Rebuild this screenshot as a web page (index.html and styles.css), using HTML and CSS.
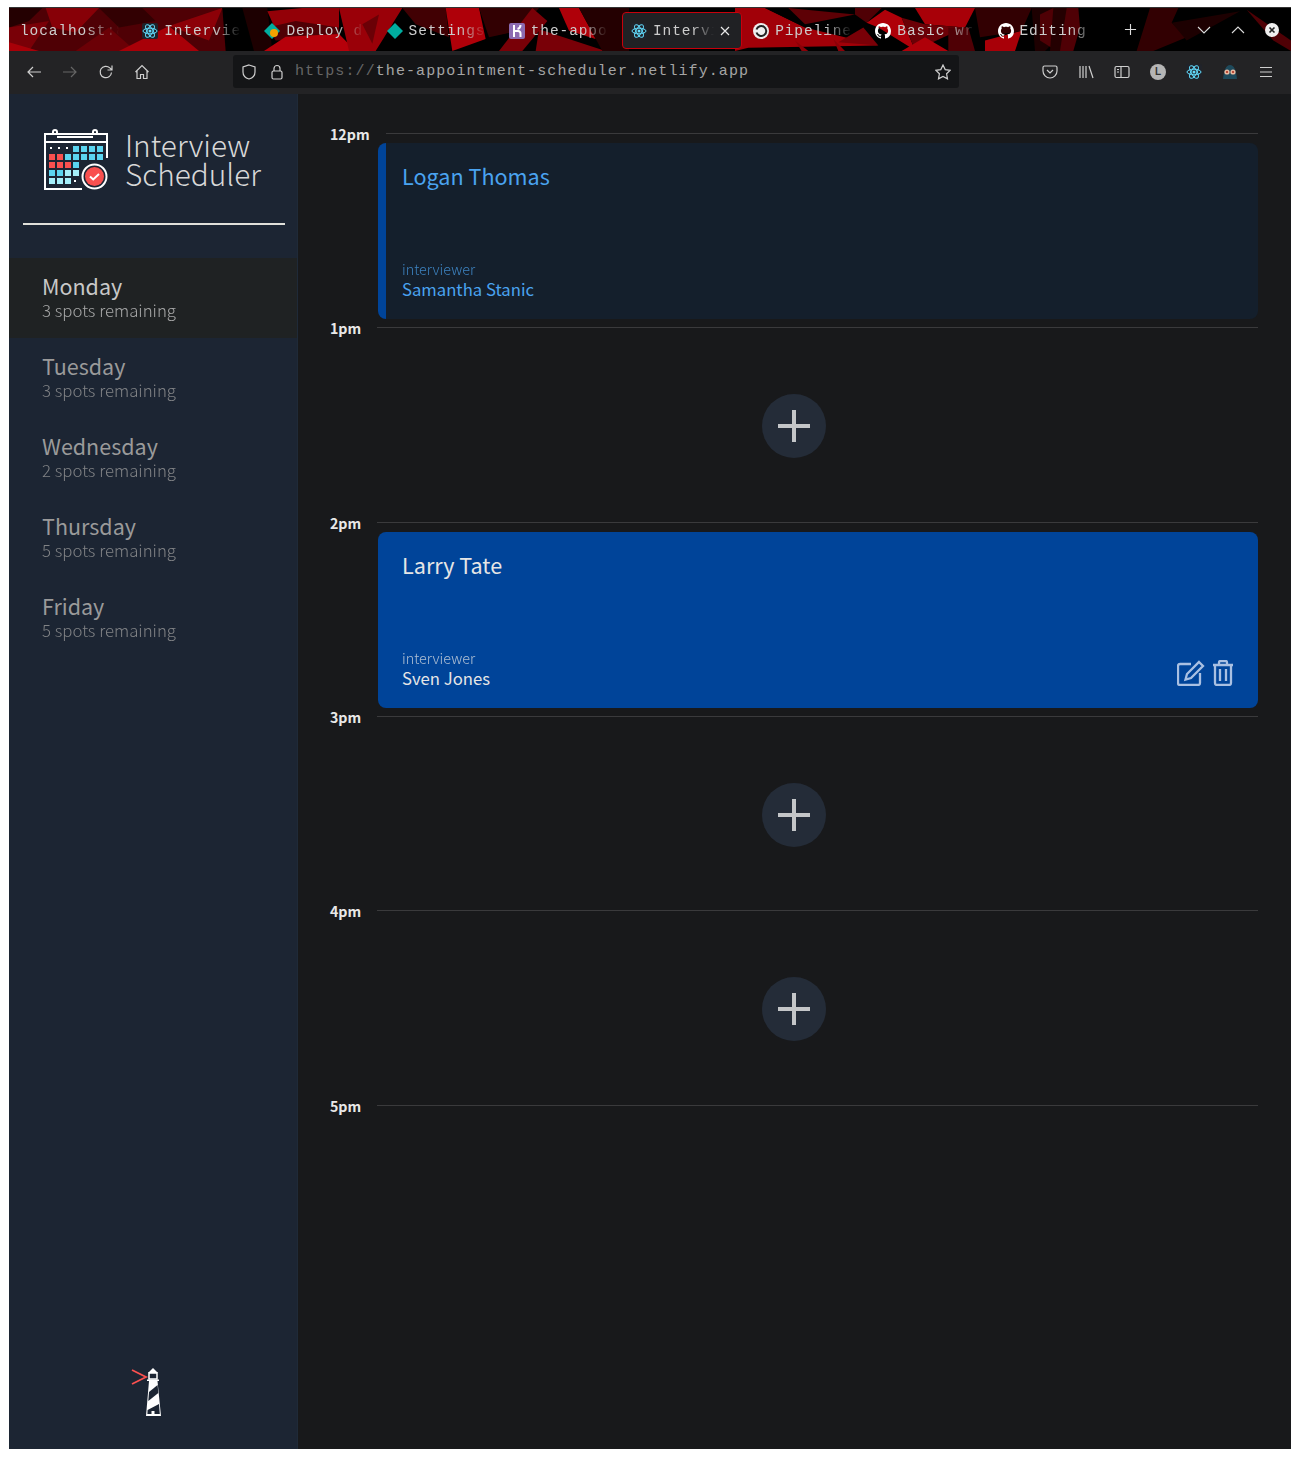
FILE: index.html
```html
<!DOCTYPE html>
<html>
	<head>
		<meta charset="utf-8">
		<title>Interview Scheduler</title>
		<link rel="stylesheet" href="styles.css">
	</head>
	<body>
		<svg class="defs" width="0" height="0">
			<symbol id="react" viewBox="0 0 16 16">
				<rect width="16" height="16" rx="2" fill="#20232a"/>
				<g fill="none" stroke="#61dafb" stroke-width="1">
					<ellipse cx="8" cy="8" rx="7" ry="2.8"/>
					<ellipse cx="8" cy="8" rx="7" ry="2.8" transform="rotate(60 8 8)"/>
					<ellipse cx="8" cy="8" rx="7" ry="2.8" transform="rotate(120 8 8)"/>
				</g>
				<circle cx="8" cy="8" r="1.5" fill="#61dafb"/>
			</symbol>
			<symbol id="github" viewBox="0 0 16 16">
				<path fill="#fff" d="M8 0C3.58 0 0 3.58 0 8c0 3.54 2.29 6.53 5.47 7.59.4.07.55-.17.55-.38 0-.19-.01-.82-.01-1.49-2.01.37-2.53-.49-2.69-.94-.09-.23-.48-.94-.82-1.13-.28-.15-.68-.52-.01-.53.63-.01 1.08.58 1.23.82.72 1.21 1.87.87 2.33.66.07-.52.28-.87.51-1.07-1.78-.2-3.64-.89-3.64-3.95 0-.87.31-1.59.82-2.15-.08-.2-.36-1.02.08-2.12 0 0 .67-.21 2.2.82.64-.18 1.32-.27 2-.27.68 0 1.36.09 2 .27 1.53-1.04 2.2-.82 2.2-.82.44 1.1.16 1.92.08 2.12.51.56.82 1.27.82 2.15 0 3.07-1.87 3.75-3.65 3.95.29.25.54.73.54 1.48 0 1.07-.01 1.93-.01 2.2 0 .21.15.46.55.38A8.013 8.013 0 0016 8c0-4.42-3.58-8-8-8z"/>
			</symbol>
		</svg>

		<div class="window">
			<!-- tab strip -->
			<div class="tabbar">
				<svg class="theme" viewBox="0 0 3846 132" preserveAspectRatio="none">
					<rect width="3846" height="132" fill="#000"/>
					<!-- first third -->
					<polygon fill="#5a0006" points="0,0 640,0 690,132 0,132"/>
					<polygon fill="#9a0008" points="110,0 270,0 200,75 130,60"/>
					<polygon fill="#2a0002" points="0,0 100,0 60,40 0,60"/>
					<polygon fill="#8a0008" points="0,60 120,40 60,132 0,132"/>
					<polygon fill="#c0000a" points="0,105 90,132 0,132"/>
					<polygon fill="#3a0003" points="270,0 400,0 440,40 330,60"/>
					<polygon fill="#7a0007" points="200,132 300,60 380,132"/>
					<polygon fill="#c0000a" points="330,132 480,55 570,132"/>
					<polygon fill="#a00009" points="480,55 640,0 600,100"/>
					<polygon fill="#000" points="640,0 720,0 745,132 650,132"/>
					<polygon fill="#220002" points="700,0 775,0 790,132 735,132"/>
					<polygon fill="#a80009" points="775,10 880,0 990,0 990,70 810,90"/>
					<polygon fill="#5a0006" points="775,60 860,40 990,60 990,90 800,100"/>
					<polygon fill="#d0000c" points="765,132 830,88 990,80 1040,132"/>
					<!-- second third -->
					<g transform="translate(990)">
						<polygon fill="#b0000a" points="0,0 150,0 190,0 110,132 30,132"/>
						<polygon fill="#7a0007" points="70,50 120,20 100,110"/>
						<polygon fill="#000" points="130,132 220,50 320,132"/>
						<polygon fill="#4a0004" points="190,0 320,0 330,90 230,50"/>
						<polygon fill="#c8000b" points="320,0 420,0 440,95 340,132"/>
						<polygon fill="#3a0003" points="420,0 600,0 540,70 450,90"/>
						<polygon fill="#000" points="440,95 540,70 500,132 440,132"/>
						<polygon fill="#8a0008" points="580,0 625,40 550,132 480,132"/>
						<polygon fill="#c8000b" points="660,0 720,0 770,95 690,70"/>
						<polygon fill="#8a0008" points="600,65 800,132 590,132"/>
						<polygon fill="#2a0002" points="720,0 870,0 870,132 790,132"/>
					</g>
					<!-- third third -->
					<g transform="translate(2178)">
						<polygon fill="#b8000a" points="0,0 90,0 210,60 430,115 40,122 0,132"/>
						<polygon fill="#000" points="90,0 160,0 210,60"/>
						<polygon fill="#6a0006" points="160,0 360,20 210,50"/>
						<polygon fill="#8a0008" points="310,105 385,60 430,115"/>
						<polygon fill="#a00009" points="180,100 220,132 200,132"/>
						<polygon fill="#a00009" points="295,95 330,132 310,132"/>
						<polygon fill="#5a0006" points="360,0 440,0 395,45 360,20"/>
						<polygon fill="#c8000b" points="395,45 450,5 500,30 540,130 430,60"/>
						<polygon fill="#c0000a" points="540,0 720,0 690,60 570,50"/>
						<polygon fill="#7a0007" points="500,30 570,50 690,60 540,130"/>
						<polygon fill="#c8000b" points="500,132 570,90 640,132"/>
						<polygon fill="#5a0006" points="640,60 700,60 720,132 640,132"/>
						<polygon fill="#c0000a" points="750,100 860,70 840,132 750,132"/>
						<polygon fill="#3a0003" points="720,0 890,0 860,70 735,90"/>
						<polygon fill="#220002" points="890,0 990,0 990,70 930,132 900,132"/>
					</g>
					<!-- last bit, mostly black -->
					<g transform="translate(3093)">
						<polygon fill="#5a0006" points="0,20 40,0 115,0 120,60 100,132 50,132 0,100"/>
						<polygon fill="#2a0002" points="40,0 80,0 60,132 30,132"/>
						<polygon fill="#3a0003" points="290,132 330,0 415,0 395,45 440,90 340,132"/>
						<polygon fill="#220002" points="395,45 600,10 440,100"/>
						<polygon fill="#5a0006" points="620,5 753,100 753,132 700,100"/>
					</g>
				</svg>

				<div class="tab"><span class="tab-title">localhost:8000</span></div>
				<div class="tab">
					<svg class="tab-icon"><use href="#react"/></svg>
					<span class="tab-title">Interview Scheduler</span>
				</div>
				<div class="tab">
					<svg class="tab-icon" viewBox="0 0 16 16">
						<polygon fill="#00ad9f" points="8,0 16,8 8,16 0,8"/>
						<circle cx="10" cy="10" r="4" fill="#f5a200"/>
					</svg>
					<span class="tab-title">Deploy details</span>
				</div>
				<div class="tab">
					<svg class="tab-icon" viewBox="0 0 16 16">
						<polygon fill="#00ad9f" points="8,0 16,8 8,16 0,8"/>
					</svg>
					<span class="tab-title">Settings for</span>
				</div>
				<div class="tab">
					<svg class="tab-icon" viewBox="0 0 16 16">
						<rect width="16" height="16" rx="2" fill="#8c6bb1"/>
						<path fill="none" stroke="#fff" stroke-width="2" d="M5 2v12M5 8h4c2 0 2.500 1 2.500 2.500V14M11.500 2c0 2.500-1 3.500-3 4"/>
					</svg>
					<span class="tab-title">the-appointment</span>
				</div>
				<div class="tab tab-active">
					<svg class="tab-icon"><use href="#react"/></svg>
					<span class="tab-title">Interview</span>
					<svg class="tab-close" viewBox="0 0 10 10"><path d="M1 1l8 8M9 1l-8 8"/></svg>
				</div>
				<div class="tab">
					<svg class="tab-icon" viewBox="0 0 16 16">
						<circle cx="8" cy="8" r="8" fill="#eee"/>
						<path fill="none" stroke="#222" stroke-width="2" d="M3.500 6.500A5 5 0 1 1 3.500 9.500"/>
						<circle cx="8" cy="8" r="2.200" fill="#eee"/>
					</svg>
					<span class="tab-title">Pipelines</span>
				</div>
				<div class="tab">
					<svg class="tab-icon"><use href="#github"/></svg>
					<span class="tab-title">Basic writing</span>
				</div>
				<div class="tab">
					<svg class="tab-icon"><use href="#github"/></svg>
					<span class="tab-title">Editing the</span>
				</div>
				<div class="tab-controls">
					<svg class="tab-new" viewBox="0 0 14 14"><path d="M7 1v12M1 7h12"/></svg>
					<div class="wm-buttons">
						<svg class="wm-btn" viewBox="0 0 14 14"><path d="M1 4l6 6 6-6"/></svg>
						<svg class="wm-btn" viewBox="0 0 14 14"><path d="M1 10l6-6 6 6"/></svg>
						<svg class="wm-close" viewBox="0 0 14 14">
							<circle cx="7" cy="7" r="7" fill="#eee"/>
							<path d="M4.500 4.500l5 5M9.500 4.500l-5 5" stroke="#222" stroke-width="1.600"/>
						</svg>
					</div>
				</div>
			</div>

			<!-- toolbar -->
			<div class="toolbar">
				<div class="nav-group">
					<button class="tool"><svg viewBox="0 0 16 16"><path d="M15 8H2M7 3L2 8l5 5"/></svg></button>
					<button class="tool tool-off"><svg viewBox="0 0 16 16"><path d="M1 8h13M9 3l5 5-5 5"/></svg></button>
					<button class="tool"><svg viewBox="0 0 16 16"><path d="M13.500 8.500a5.700 5.700 0 1 1-1.700-4.600L14 6M14 1.500V6H9.500"/></svg></button>
					<button class="tool"><svg viewBox="0 0 16 16"><path d="M1.500 8L8 1.500 14.500 8M3 7v7.500h3.500v-4h3v4H13V7"/></svg></button>
				</div>
				<div class="urlbar">
					<svg class="url-icon" viewBox="0 0 16 16"><path d="M8 1l6 2v5c0 3.500-2.500 6-6 7-3.500-1-6-3.500-6-7V3z"/></svg>
					<svg class="url-icon" viewBox="0 0 16 16"><rect x="3" y="7" width="10" height="8" rx="1.500"/><path d="M5 7V4.500a3 3 0 0 1 6 0V7"/></svg>
					<span class="url-text"><span class="url-dim">https://</span>the-appointment-scheduler.netlify.app</span>
					<svg class="url-star" viewBox="0 0 16 16"><path d="M8 1l2.200 4.600 5 .7-3.600 3.500.9 5L8 12.400l-4.500 2.400.9-5L.8 6.300l5-.7z"/></svg>
				</div>
				<div class="nav-group">
					<button class="tool"><svg viewBox="0 0 16 16"><path d="M2.500 2h11A1.500 1.500 0 0 1 15 3.500V7a7 7 0 0 1-14 0V3.500A1.500 1.500 0 0 1 2.500 2zM5 6l3 3 3-3"/></svg></button>
					<button class="tool"><svg viewBox="0 0 16 16"><path d="M2 2v12M5 2v12M8 2v12M11 2l4 12"/></svg></button>
					<button class="tool"><svg viewBox="0 0 16 16"><rect x="1" y="2.500" width="14" height="11" rx="1.500"/><path d="M7 2.500v11M3 5.500h2M3 8h2"/></svg></button>
					<button class="tool"><span class="avatar">L</span></button>
					<button class="tool"><svg class="ext"><use href="#react"/></svg></button>
					<button class="tool">
						<svg class="ext-owl" viewBox="0 0 16 16">
							<path fill="#1e4a5c" d="M8 1c4 0 6 5 7 14H1C2 6 4 1 8 1z"/>
							<circle cx="5" cy="8" r="2.600" fill="#e8b9a0"/>
							<circle cx="11" cy="8" r="2.600" fill="#e8b9a0"/>
							<circle cx="5" cy="8" r="1.100" fill="#b03020"/>
							<circle cx="11" cy="8" r="1.100" fill="#b03020"/>
						</svg>
					</button>
					<button class="tool"><svg viewBox="0 0 16 16"><path d="M2 3.500h12M2 8h12M2 12.500h12"/></svg></button>
				</div>
			</div>

			<div class="layout">
				<aside class="sidebar">
					<div class="brand">
						<svg class="brand-logo" viewBox="44 129 64 62">
							<g fill="none" stroke="#fff" stroke-width="2">
								<path d="M82 189H45V134h62v24"/>
								<path d="M45 142h62M57 137h36"/>
								<path d="M53 135v-3a2 2 0 0 1 4 0v3M93 135v-3a2 2 0 0 1 4 0v3"/>
							</g>
							<g fill="#fff">
								<rect x="50" y="147" width="2" height="2"/>
								<rect x="58" y="147" width="2" height="2"/>
								<rect x="66" y="147" width="2" height="2"/>
								<rect x="74" y="180" width="2" height="2"/>
							</g>
							<g fill="#5bd5f0">
								<rect x="73" y="146" width="6" height="6"/>
								<rect x="81" y="146" width="6" height="6"/>
								<rect x="89" y="146" width="6" height="6"/>
								<rect x="97" y="146" width="6" height="6"/>
								<rect x="65" y="154" width="6" height="6"/>
								<rect x="73" y="154" width="6" height="6"/>
								<rect x="81" y="154" width="6" height="6"/>
								<rect x="89" y="154" width="6" height="6"/>
								<rect x="97" y="154" width="6" height="6"/>
								<rect x="73" y="162" width="6" height="6"/>
								<rect x="49" y="170" width="6" height="6"/>
								<rect x="57" y="170" width="6" height="6"/>
							</g>
							<g fill="#a5effa">
								<rect x="65" y="170" width="6" height="6"/>
								<rect x="73" y="170" width="6" height="6"/>
								<rect x="49" y="178" width="6" height="6"/>
								<rect x="57" y="178" width="6" height="6"/>
								<rect x="65" y="178" width="6" height="6"/>
							</g>
							<g fill="#f9504f">
								<rect x="49" y="154" width="6" height="6"/>
								<rect x="57" y="154" width="6" height="6"/>
								<rect x="49" y="162" width="6" height="6"/>
								<rect x="57" y="162" width="6" height="6"/>
								<rect x="65" y="162" width="6" height="6"/>
							</g>
							<circle cx="94.500" cy="176.500" r="13.500" fill="#1c2533"/>
							<circle cx="94.500" cy="176.500" r="12" fill="none" stroke="#fff" stroke-width="2"/>
							<circle cx="94.500" cy="176.500" r="9.500" fill="#f9504f"/>
							<path d="M90 176.500l3.200 3 5.800-5.500" fill="none" stroke="#fff" stroke-width="2"/>
						</svg>
						<div class="brand-name">Interview<br>Scheduler</div>
					</div>
					<hr class="sidebar-sep">
					<ul class="days">
						<li class="day day-active">
							<h2 class="day-name">Monday</h2>
							<p class="day-spots">3 spots remaining</p>
						</li>
						<li class="day">
							<h2 class="day-name">Tuesday</h2>
							<p class="day-spots">3 spots remaining</p>
						</li>
						<li class="day">
							<h2 class="day-name">Wednesday</h2>
							<p class="day-spots">2 spots remaining</p>
						</li>
						<li class="day">
							<h2 class="day-name">Thursday</h2>
							<p class="day-spots">5 spots remaining</p>
						</li>
						<li class="day">
							<h2 class="day-name">Friday</h2>
							<p class="day-spots">5 spots remaining</p>
						</li>
					</ul>
					<svg class="lhl" viewBox="130 1366 34 52">
						<path d="M132 1370l14 7-14 7" fill="none" stroke="#f9504f" stroke-width="1.800"/>
						<polygon fill="#fff" points="148,1373 153,1368 158,1373"/>
						<path fill="none" stroke="#fff" stroke-width="1.500" d="M149 1373h8v6h-8z"/>
						<polygon fill="#fff" points="147,1379.500 159,1379.500 159,1381 157.500,1381 161,1416 146,1416 149,1381 147,1381"/>
						<polygon fill="#1c2533" points="149,1392 157.600,1385 158.300,1393 148.300,1401"/>
						<polygon fill="#1c2533" points="147.600,1410 159,1404 159.800,1414 154.500,1414 154.500,1411 151.500,1411 151.500,1414 147.400,1414"/>
					</svg>
				</aside>

				<main class="schedule">
					<article class="slot">
						<header class="slot-time"><h4 class="time-label">12pm</h4><hr class="time-line"></header>
						<section class="card card-focus">
							<h2 class="card-name">Logan Thomas</h2>
							<div class="card-foot">
								<div>
									<h4 class="card-label">interviewer</h4>
									<h3 class="card-who">Samantha Stanic</h3>
								</div>
							</div>
						</section>
					</article>

					<article class="slot">
						<header class="slot-time"><h4 class="time-label">1pm</h4><hr class="time-line"></header>
						<div class="slot-empty"><button class="add-btn"><svg viewBox="0 0 32 32"><path d="M16 0v32M0 16h32"/></svg></button></div>
					</article>

					<article class="slot">
						<header class="slot-time"><h4 class="time-label">2pm</h4><hr class="time-line"></header>
						<section class="card card-show">
							<h2 class="card-name">Larry Tate</h2>
							<div class="card-foot">
								<div>
									<h4 class="card-label">interviewer</h4>
									<h3 class="card-who">Sven Jones</h3>
								</div>
								<div class="card-actions">
									<svg class="act-edit" viewBox="0 0 28 26">
										<path d="M14 4H3a2 2 0 0 0-2 2v17a2 2 0 0 0 2 2h18a2 2 0 0 0 2-2V13"/>
										<path d="M22 2l4 4-12 12-5.500 1.500L10 14z"/>
									</svg>
									<svg class="act-trash" viewBox="0 0 22 26">
										<path d="M1 5h20M7 5V2.500A1.500 1.500 0 0 1 8.500 1h5A1.500 1.500 0 0 1 15 2.500V5"/>
										<path d="M3 5v18a2 2 0 0 0 2 2h12a2 2 0 0 0 2-2V5M8 9v12M14 9v12"/>
									</svg>
								</div>
							</div>
						</section>
					</article>

					<article class="slot">
						<header class="slot-time"><h4 class="time-label">3pm</h4><hr class="time-line"></header>
						<div class="slot-empty"><button class="add-btn"><svg viewBox="0 0 32 32"><path d="M16 0v32M0 16h32"/></svg></button></div>
					</article>

					<article class="slot">
						<header class="slot-time"><h4 class="time-label">4pm</h4><hr class="time-line"></header>
						<div class="slot-empty"><button class="add-btn"><svg viewBox="0 0 32 32"><path d="M16 0v32M0 16h32"/></svg></button></div>
					</article>

					<article class="slot">
						<header class="slot-time"><h4 class="time-label">5pm</h4><hr class="time-line"></header>
					</article>
				</main>
			</div>
		</div>
	</body>
</html>
```
FILE: styles.css
```css
* {
	margin: 0;
	padding: 0;
	box-sizing: border-box;
}

body {
	height: 1458px;
	padding: 7px 9px 9px;
	background-color: #fff;
	overflow: hidden;
	font-family: "Noto Sans CJK SC", "Source Sans Pro", "Open Sans", sans-serif;
}

.defs {
	position: absolute;
}

.window {
	height: 100%;
	display: flex;
	flex-direction: column;
	background-color: #18191b;
}

/* tab strip */
.tabbar {
	height: 44px;
	display: flex;
	align-items: center;
	position: relative;
	flex: none;
	border-top: 1px solid #333;
	background-color: #000;
	font-family: "Liberation Mono", monospace;
	font-size: 14.5px;
	letter-spacing: 0.9px;
	color: #ccc;
}

.theme {
	position: absolute;
	left: 0;
	top: 0;
	width: 100%;
	height: 100%;
	opacity: 0.88;
}

.tab {
	width: 122.2px;
	height: 37px;
	margin-top: 2px;
	padding: 0 11px 0 10px;
	display: flex;
	align-items: center;
	gap: 6px;
	position: relative;
	border: 1px solid transparent;
	border-radius: 4px;
}

.tab-icon {
	width: 16px;
	height: 16px;
	flex: none;
}

.tab-title {
	flex: 1;
	min-width: 0;
	overflow: hidden;
	white-space: nowrap;
	-webkit-mask-image: linear-gradient(to right, #000 65%, transparent 100%);
	mask-image: linear-gradient(to right, #000 65%, transparent 100%);
}

.tab-active {
	width: 120.2px;
	margin-left: 2px;
	padding-left: 8px;
	background-color: #202124;
	border-color: #c8000b;
}

.tab-close {
	width: 10px;
	height: 10px;
	flex: none;
	fill: none;
	stroke: #e8e8e8;
	stroke-width: 1.2;
}

.tab-controls {
	flex: 1;
	display: flex;
	align-items: center;
	position: relative;
	justify-content: space-between;
	padding: 0 12px 0 15px;
}

.tab-new {
	width: 13px;
	height: 13px;
	fill: none;
	stroke: #ddd;
	stroke-width: 1.2;
}

.wm-buttons {
	display: flex;
	align-items: center;
	gap: 20px;
}

.wm-btn {
	width: 14px;
	height: 14px;
	fill: none;
	stroke: #ddd;
	stroke-width: 1.1;
}

.wm-close {
	width: 14px;
	height: 14px;
}

/* toolbar */
.toolbar {
	height: 43px;
	flex: none;
	display: flex;
	align-items: center;
	padding: 0 7px 2px;
	background-color: #232325;
}

.nav-group {
	display: flex;
}

.tool {
	width: 36px;
	height: 32px;
	display: flex;
	align-items: center;
	justify-content: center;
	border: 0;
	background: none;
}

.tool svg {
	width: 16px;
	height: 16px;
	fill: none;
	stroke: #cfcfcf;
	stroke-width: 1.2;
}

.tool-off svg {
	stroke: #666;
}

.tool .ext,
.tool .ext-owl {
	stroke: none;
}

.avatar {
	width: 16px;
	height: 16px;
	border-radius: 50%;
	background-color: #b5b5b5;
	color: #333;
	font-size: 10px;
	line-height: 16px;
	font-weight: bold;
	font-family: "Liberation Sans", sans-serif;
	text-align: center;
}

.urlbar {
	width: 726px;
	height: 33px;
	margin: 0 73px;
	padding: 0 8px;
	display: flex;
	align-items: center;
	gap: 12px;
	background-color: #141517;
	border-radius: 3px;
	font-family: "Liberation Mono", monospace;
	font-size: 15px;
	letter-spacing: 1.09px;
	color: #a5a5a5;
}

.url-icon,
.url-star {
	width: 16px;
	height: 16px;
	flex: none;
	fill: none;
	stroke: #cfcfcf;
	stroke-width: 1.200;
}

.url-text {
	flex: 1;
	margin-left: -2px;
	white-space: nowrap;
}

.url-dim {
	color: #666;
}

/* page */
.layout {
	flex: 1;
	min-height: 0;
	display: flex;
}

.sidebar {
	width: 289px;
	flex: none;
	display: flex;
	flex-direction: column;
	background-color: #1c2533;
	border-right: 1px solid #1f2a38;
}

.brand {
	display: flex;
	align-items: center;
	gap: 17px;
	padding: 35px 0 0 35px;
}

.brand-logo {
	width: 64px;
	height: 62px;
	flex: none;
}

.brand-name {
	margin-top: -3px;
	font-size: 29.8px;
	font-weight: 300;
	line-height: 28.6px;
	color: #d8d8d8;
}

.sidebar-sep {
	height: 2px;
	margin: 32px 12px 33px 14px;
	border: 0;
	background-color: #e0e0da;
}

.days {
	list-style: none;
}

.day {
	height: 80px;
	padding: 15px 33px 0;
	color: #9a9a9a;
}

.day-active {
	background-color: #1f2223;
	color: #c8c8c8;
}

.day-name {
	font-size: 21.5px;
	line-height: 26px;
	font-weight: 400;
}

.day-spots {
	font-size: 16.8px;
	line-height: 22px;
	font-weight: 300;
	opacity: 0.8;
}

.lhl {
	width: 34px;
	height: 52px;
	margin: auto 0 31px 121px;
}

.schedule {
	flex: 1;
	padding: 29.4px 33px 0 32px;
}

.slot {
	height: 194.4px;
}

.slot-time {
	height: 20px;
	display: flex;
	align-items: center;
	gap: 16px;
}

.time-label {
	font-size: 14.2px;
	line-height: 20px;
	font-weight: 700;
	color: #e8e8e8;
	padding-top: 1px;
}

.time-line {
	flex: 1;
	height: 1px;
	border: 0;
	background-color: #3a3a3c;
}

.slot-empty {
	height: 177px;
	display: flex;
	align-items: center;
	justify-content: center;
}

.add-btn {
	width: 64px;
	height: 64px;
	display: flex;
	align-items: center;
	justify-content: center;
	border: 0;
	border-radius: 50%;
	background-color: #242c38;
}

.add-btn svg {
	width: 32px;
	height: 32px;
	fill: none;
	stroke: #c4c6c8;
	stroke-width: 4;
}

.card {
	height: 176px;
	margin-left: 48px;
	padding: 16px 24px 20px;
	display: flex;
	flex-direction: column;
	justify-content: space-between;
	border-radius: 8px;
}

.card-focus {
	background-color: #141f2c;
	border-left: 8px solid #004499;
	padding-left: 16px;
	color: #4aa3f0;
}

.card-show {
	background-color: #004499;
	color: #e6e6e6;
}

.card-name {
	font-size: 21.6px;
	line-height: 34px;
	font-weight: 400;
}

.card-foot {
	display: flex;
	align-items: flex-end;
	justify-content: space-between;
}

.card-label {
	font-size: 14.4px;
	line-height: 20px;
	font-weight: 300;
	opacity: 0.75;
}

.card-who {
	font-size: 16.7px;
	line-height: 20px;
	font-weight: 400;
}

.card-actions {
	display: flex;
	gap: 7px;
	margin-bottom: 2px;
}

.card-actions svg {
	height: 26px;
	fill: none;
	stroke: #a9c0e2;
	stroke-width: 2.300;
}

.act-edit {
	width: 28px;
}

.act-trash {
	width: 22px;
}
```
